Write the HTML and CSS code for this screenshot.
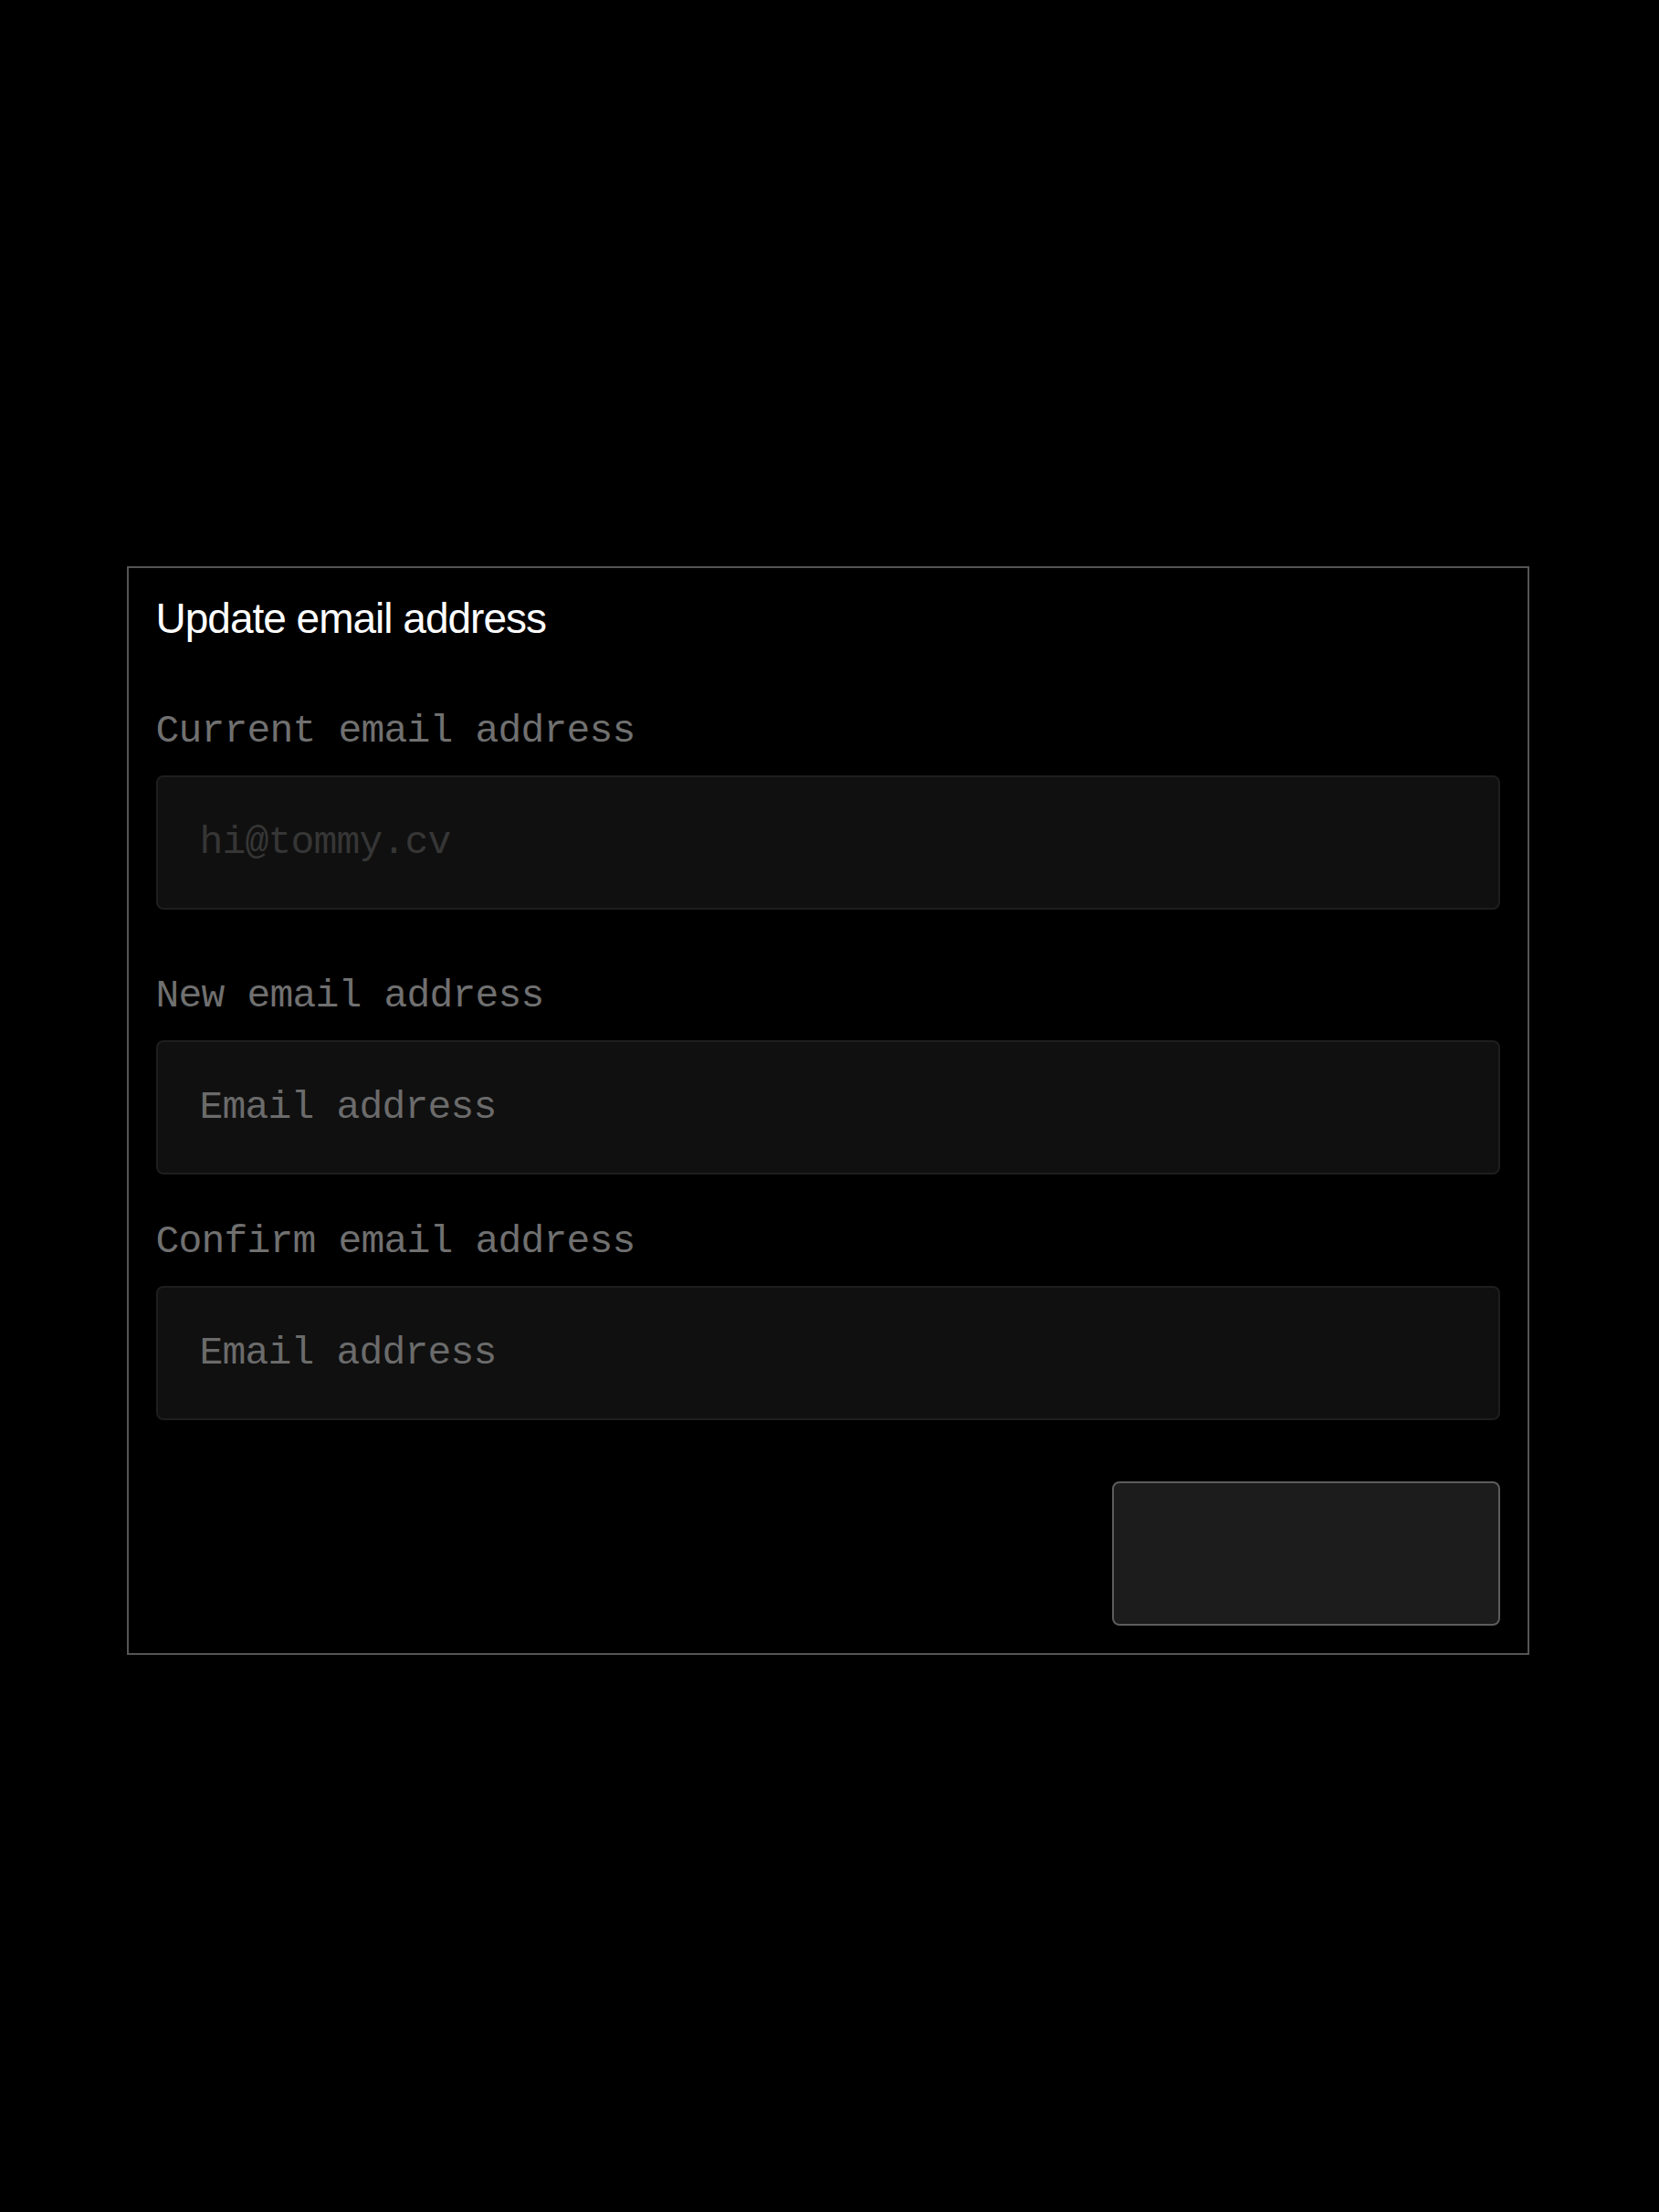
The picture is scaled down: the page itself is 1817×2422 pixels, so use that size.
FILE: index.html
```html
<!DOCTYPE html>
<html>
<head>
  <title>Update email address</title>
  <link rel="stylesheet" href="styles.css">
</head>
<body>
  <form class="email-card">
    <h1 class="email-title">Update email address</h1>

    <div class="field field-first">
      <label class="field-label" for="currentEmail">Current email address</label>
      <input id="currentEmail" class="field-input" type="email" value="hi@tommy.cv" disabled>
    </div>

    <div class="field field-second">
      <label class="field-label" for="newEmail">New email address</label>
      <input id="newEmail" class="field-input" type="email" placeholder="Email address">
    </div>

    <div class="field">
      <label class="field-label" for="confirmEmail">Confirm email address</label>
      <input id="confirmEmail" class="field-input" type="email" placeholder="Email address">
    </div>

    <div class="actions">
      <button type="submit" class="save-btn" aria-label="Save"></button>
    </div>
  </form>
</body>
</html>
```

FILE: styles.css
```css
* {
  box-sizing: border-box;
}

body {
  margin: 0;
  min-height: 100vh;
  padding: 10px 4px 0 0;
  background: #000;
  display: flex;
  align-items: center;
  justify-content: center;
  font-family: "Liberation Mono", "DejaVu Sans Mono", monospace;
}

.email-card {
  width: 1536px;
  border: 2px solid #555;
  background: #000;
  padding: 28px 30px 30px;
}

.email-title {
  margin: 0 0 72px;
  font-family: "Liberation Sans", Arial, sans-serif;
  font-weight: normal;
  font-size: 46px;
  line-height: 55px;
  letter-spacing: -1px;
  color: #fff;
}

.field-label {
  display: block;
  margin-bottom: 24px;
  font-size: 43px;
  line-height: 48px;
  letter-spacing: -0.8px;
  color: #707070;
}

.field-first {
  margin-bottom: 71px;
}

.field-second {
  margin-bottom: 50px;
}

.field-input {
  display: block;
  width: 100%;
  height: 147px;
  padding: 0 46px;
  border: 2px solid #1e1e1e;
  border-radius: 8px;
  background: #101010;
  font-family: "Liberation Mono", "DejaVu Sans Mono", monospace;
  font-size: 43px;
  letter-spacing: -0.8px;
  color: #6b6b6b;
  outline: none;
}

.field-input::placeholder {
  color: #6b6b6b;
}

.field-input:disabled {
  color: #363636;
}

.actions {
  display: flex;
  justify-content: flex-end;
  margin-top: 67px;
}

.save-btn {
  width: 425px;
  height: 158px;
  border: 2px solid #5c5c5c;
  border-radius: 8px;
  background: #1c1c1c;
  cursor: pointer;
}
```
